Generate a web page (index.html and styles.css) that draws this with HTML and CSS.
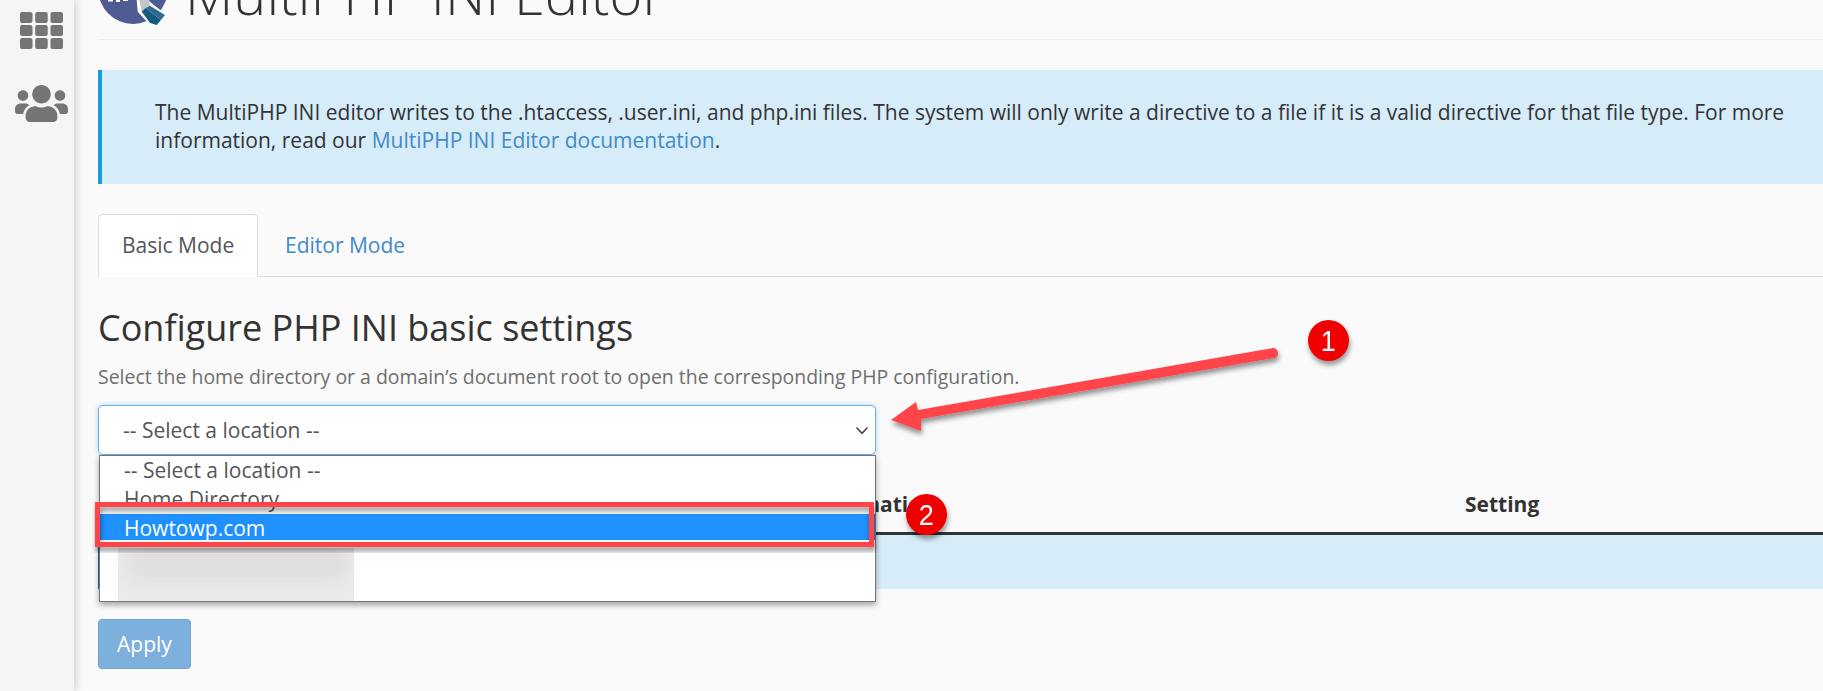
FILE: index.html
```html
<!DOCTYPE html>
<html lang="en">
<head>
<meta charset="utf-8">
<title>MultiPHP INI Editor</title>
<link rel="stylesheet" href="styles.css">
</head>
<body>
<aside class="sidebar">
  <svg class="icon-grid" viewBox="0 0 43 37" aria-hidden="true">
    <rect x="0" y="0" width="12.5" height="11" rx="2"/><rect x="15.2" y="0" width="12.5" height="11" rx="2"/><rect x="30.5" y="0" width="12.5" height="11" rx="2"/>
    <rect x="0" y="13" width="12.5" height="11" rx="2"/><rect x="15.2" y="13" width="12.5" height="11" rx="2"/><rect x="30.5" y="13" width="12.5" height="11" rx="2"/>
    <rect x="0" y="26" width="12.5" height="11" rx="2"/><rect x="15.2" y="26" width="12.5" height="11" rx="2"/><rect x="30.5" y="26" width="12.5" height="11" rx="2"/>
  </svg>
  <svg class="icon-users" viewBox="0 32 640 448" aria-hidden="true"><path d="M96 224c35.300 0 64-28.700 64-64s-28.700-64-64-64-64 28.700-64 64 28.700 64 64 64zm448 0c35.300 0 64-28.700 64-64s-28.700-64-64-64-64 28.700-64 64 28.700 64 64 64zm32 32h-64c-17.600 0-33.500 7.100-45.100 18.600 40.300 22.100 68.900 62 75.100 109.400h66c17.700 0 32-14.300 32-32v-32c0-35.300-28.700-64-64-64zm-256 0c61.900 0 112-50.100 112-112S381.900 32 320 32 208 82.100 208 144s50.100 112 112 112zm76.800 32h-8.300c-20.800 10-43.900 16-68.500 16s-47.600-6-68.500-16h-8.300C179.600 288 128 339.600 128 403.200V432c0 26.500 21.500 48 48 48h288c26.500 0 48-21.500 48-48v-28.800c0-63.600-51.600-115.200-115.200-115.200zm-223.700-13.400C161.500 263.100 145.600 256 128 256H64c-35.300 0-64 28.700-64 64v32c0 17.700 14.300 32 32 32h65.900c6.300-47.400 34.900-87.300 75.200-109.400z"/></svg>
</aside>
<main class="main">
  <header class="page-head">
    <svg class="logo" viewBox="0 0 72 27" aria-hidden="true">
      <circle cx="35" cy="-10.700" r="34.700" fill="#4f5b93"/>
      <path d="M10 0h5v1.500h-5zM18 0h4v2h-4zM25 0h5v1h-5z" fill="#fff"/>
      <path d="M38.700 0 L39.700 11.700 L52 25 L58.700 26.500 L68.700 15 L52 2 L50.500 0 Z" fill="#fff"/>
      <path d="M41.300 0 L50.300 0 L52 5.700 L43.700 11.700 Z" fill="#c4c4c4"/>
      <path d="M52 5.700 L67 15 L63 20 L47.700 8 Z" fill="#2e6a96"/>
      <path d="M43.700 11.700 L47.700 8 L63 20 L58.700 25 L52 23 Z" fill="#17597f"/>
    </svg>
    <h1 class="page-title">MultiPHP INI Editor</h1>
  </header>

  <div class="alert">
    <p>The MultiPHP INI editor writes to the .htaccess, .user.ini, and php.ini files. The system will only write a directive to a file if it is a valid directive for that file type. For more information, read our <a href="#">MultiPHP INI Editor documentation</a>.</p>
  </div>

  <nav class="tabs">
    <a class="tab tab-active" href="#">Basic Mode</a>
    <a class="tab tab-link" href="#">Editor Mode</a>
  </nav>

  <h2 class="section-title">Configure PHP INI basic settings</h2>
  <p class="section-help">Select the home directory or a domain’s document root to open the corresponding PHP configuration.</p>

  <div class="picker">
    <div class="select">
      <span>-- Select a location --</span>
      <svg class="chevron" viewBox="0 0 14 9" aria-hidden="true"><path d="M1.500 1.500 L7 7.300 L12.500 1.500" fill="none" stroke="#444" stroke-width="1.500"/></svg>
    </div>
    <ul class="listbox">
      <li class="option">-- Select a location --</li>
      <li class="option">Home Directory</li>
      <li class="option option-selected">Howtowp.com</li>
      <li class="option-blur"><span class="smear"></span></li>
    </ul>
  </div>

  <div class="table-head">
    <span class="col-info">Information</span>
    <span class="col-setting">Setting</span>
  </div>
  <div class="table-note"></div>

  <button class="apply" type="button">Apply</button>
</main>

<svg class="arrow" viewBox="0 0 1823 691" aria-hidden="true">
  <defs>
    <filter id="ds" x="-20%" y="-20%" width="140%" height="140%"><feDropShadow dx="1" dy="4" stdDeviation="2.500" flood-color="#000" flood-opacity=".42"/></filter>
  </defs>
  <g filter="url(#ds)">
    <path d="M891 420 L916 402 L918 410 L1273 348 C1279 348 1280 357 1274 358 L921 419 L921 431 Z" fill="#ff4548"/>
  </g>
  <rect class="mark" x="97.500" y="504.500" width="774" height="40" filter="url(#ds)"/>
</svg>
<div class="badge badge-one"><span>1</span></div>
<div class="badge badge-two"><span>2</span></div>
</body>
</html>
```
FILE: styles.css
```css
* { box-sizing: border-box; }
html, body { height: 100%; }
body {
  margin: 0;
  display: flex;
  height: 691px;
  overflow: hidden;
  position: relative;
  background: #fafafa;
  color: #333;
  font-family: "Open Sans", sans-serif;
  font-size: 21px;
}
.sidebar {
  flex: 0 0 74px;
  background: #f5f5f5;
  box-shadow: 2px 0 8px rgba(0,0,0,.18);
  display: flex;
  flex-direction: column;
  align-items: center;
  padding-top: 12px;
  position: relative;
  z-index: 1;
}
.icon-grid { width: 43px; height: 37px; fill: #757575; margin-left: 9px; }
.icon-users { width: 53px; height: 37px; fill: #757575; margin-top: 36px; margin-left: 9px; }
.main { flex: 1; min-width: 0; padding-left: 24px; }
.page-head {
  height: 40px;
  border-bottom: 1px solid #eee;
  display: flex;
  align-items: flex-start;
  overflow: hidden;
}
.logo { width: 72px; height: 27px; flex: none; }
.page-title {
  margin: -45px 0 0 15px;
  font-size: 56px;
  line-height: 76px;
  font-weight: 300;
  white-space: nowrap;
  color: #333;
}
.alert {
  margin-top: 30px;
  height: 114px;
  background: #d7ecf9;
  border-left: 4px solid #149dd9;
  padding: 28px 30px 0 53px;
  font-size: 21px;
  line-height: 28px;
}
.alert p { margin: 0; }
a { color: #428bca; text-decoration: none; }
.tabs {
  margin-top: 30px;
  height: 63px;
  display: flex;
  border-bottom: 1px solid #ddd;
}
.tab {
  height: 63px;
  padding: 15px 23px 0;
  line-height: 30px;
  border: 1px solid transparent;
  white-space: nowrap;
}
.tab-active {
  width: 160px;
  color: #555;
  background: #fff;
  border-color: #ddd #ddd #fff;
  border-radius: 5px 5px 0 0;
}
.tab-link { margin-left: 3px; }
.section-title {
  margin: 28px 0 0;
  font-size: 36px;
  line-height: 46px;
  font-weight: 400;
}
.section-help {
  margin: 13px 0 0;
  font-size: 19.45px;
  line-height: 26px;
  color: #6f6f6f;
}
.picker { position: relative; margin-top: 15px; width: 778px; height: 50px; }
.select {
  height: 50px;
  background: #fff;
  border: 1px solid #66afe9;
  border-radius: 5px;
  box-shadow: 0 0 5px rgba(102,175,233,.5);
  display: flex;
  align-items: center;
  justify-content: space-between;
  padding: 0 6px 0 24px;
  color: #555;
  line-height: 48px;
}
.chevron { width: 14px; height: 9px; }
.listbox {
  position: absolute;
  z-index: 2;
  top: 50px;
  left: 1px;
  width: 777px;
  height: 147px;
  margin: 0;
  padding: 0;
  list-style: none;
  background: #fff;
  border: 1px solid #767676;
  box-shadow: 0 3px 6px rgba(0,0,0,.35);
  overflow: hidden;
}
.option {
  height: 29px;
  line-height: 29px;
  padding-left: 24px;
  color: #555;
  white-space: nowrap;
}
.option-selected {
  height: 26px;
  line-height: 28px;
  background: #1e90ff;
  color: #fff;
}
.option-blur {
  position: relative;
  overflow: hidden;
  width: 236px;
  height: 54px;
  margin: 8px 0 0 18px;
  background: #ebebeb;
}
.smear {
  display: block;
  width: 220px;
  height: 30px;
  margin: 0 0 0 10px;
  background: #dcdcdc;
  filter: blur(10px);
}
.table-head {
  margin-top: 30px;
  height: 50px;
  padding-bottom: 9px;
  border-bottom: 3px solid #333;
  display: grid;
  grid-template-columns: 710px 657px 1fr;
  align-items: center;
  font-weight: 700;
}
.col-info { grid-column: 2; }
.col-setting { grid-column: 3; }
.table-note {
  height: 54px;
  background: #d7ecf9;
  border-left: 1px solid #1c6ea4;
}
.apply {
  margin-top: 30px;
  width: 93px;
  height: 50px;
  background: #7eb0dd;
  border: 1px solid #72a5d4;
  border-radius: 4px;
  color: #fff;
  font: 21px "Open Sans", sans-serif;
}
.arrow { position: absolute; inset: 0; width: 1823px; height: 691px; z-index: 3; pointer-events: none; }
.mark { fill: none; stroke: #ff4548; stroke-width: 5; }
.badge {
  position: absolute;
  z-index: 4;
  width: 41px;
  height: 41px;
  border-radius: 50%;
  background: #f00000;
  box-shadow: 1px 4px 5px rgba(0,0,0,.4);
  color: #fff;
  display: flex;
  align-items: center;
  justify-content: center;
  font-family: "Liberation Sans", sans-serif;
  font-size: 30px;
}
.badge span { display: block; transform: scaleX(.9); }
.badge-one { left: 1308px; top: 320px; }
.badge-two { left: 906px; top: 494px; }
```
